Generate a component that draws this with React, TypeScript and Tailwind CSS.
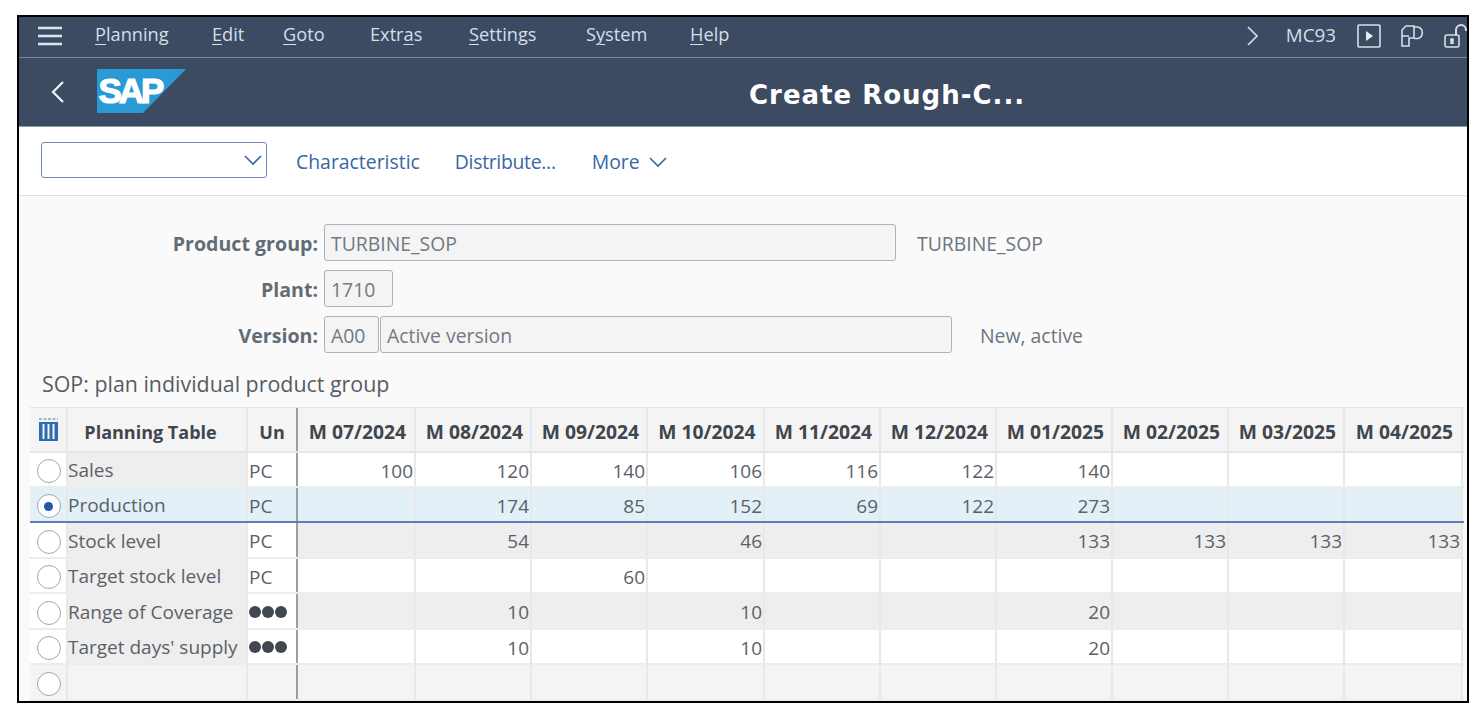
const font = "font-['Open_Sans',sans-serif]";

const months = [
  "M 07/2024",
  "M 08/2024",
  "M 09/2024",
  "M 10/2024",
  "M 11/2024",
  "M 12/2024",
  "M 01/2025",
  "M 02/2025",
  "M 03/2025",
  "M 04/2025",
];

const monthWidths = [118, 116, 116, 117, 116, 116, 116, 116, 116, 118];

type Row = {
  label: string;
  unit: string;
  values: string[];
  tone: "white" | "blue" | "gray" | "empty";
  height: string;
};

const rows: Row[] = [
  { label: "Sales", unit: "PC", values: ["100", "120", "140", "106", "116", "122", "140", "", "", ""], tone: "white", height: "h-[35px]" },
  { label: "Production", unit: "PC", values: ["", "174", "85", "152", "69", "122", "273", "", "", ""], tone: "blue", height: "h-[35px]" },
  { label: "Stock level", unit: "PC", values: ["", "54", "", "46", "", "", "133", "133", "133", "133"], tone: "gray", height: "h-[36px]" },
  { label: "Target stock level", unit: "PC", values: ["", "", "60", "", "", "", "", "", "", ""], tone: "white", height: "h-[35px]" },
  { label: "Range of Coverage", unit: "dots", values: ["", "10", "", "10", "", "", "20", "", "", ""], tone: "gray", height: "h-[36px]" },
  { label: "Target days' supply", unit: "dots", values: ["", "10", "", "10", "", "", "20", "", "", ""], tone: "white", height: "h-[35px]" },
  { label: "", unit: "", values: ["", "", "", "", "", "", "", "", "", ""], tone: "empty", height: "h-[36px]" },
];

const toneBg = {
  white: "bg-white",
  blue: "bg-[#e3f0f8]",
  gray: "bg-[#eeeeee]",
  empty: "bg-[#f4f4f4]",
};

function MenuItem({ k, rest, pre, className }: { k: string; rest: string; pre?: string; className: string }) {
  return (
    <span className={`pb-[4px] ${className}`}>
      {pre}
      <u className="underline-offset-[3px] decoration-1">{k}</u>
      {rest}
    </span>
  );
}

function Radio({ on }: { on?: boolean }) {
  return (
    <span className="flex h-[24px] w-[24px] items-center justify-center rounded-full border-[1.5px] border-[#9aa7b5] bg-white">
      {on && <span className="h-[9px] w-[9px] rounded-full bg-[#2458a6]" />}
    </span>
  );
}

function Field({ children, className }: { children: React.ReactNode; className: string }) {
  return (
    <div className={`flex h-[37px] items-center rounded-[3px] border-[1.5px] border-[#a9b4be] bg-[#f4f4f4] pl-[6px] pt-[2px] text-[#6f7a84] ${className}`}>
      {children}
    </div>
  );
}

function FormRow({ label, children }: { label: string; children: React.ReactNode }) {
  return (
    <div className="flex h-[37px] items-center">
      <div className="w-[299px] pt-[2px] text-right text-[19.6px] font-bold text-[#626c75]">{label}</div>
      <div className="ml-[6px] flex items-center">{children}</div>
    </div>
  );
}

function Logo() {
  return (
    <svg width="89" height="44" viewBox="0 0 89 44" className="mb-[2px] ml-[32px]">
      <polygon points="0,0 89,0 46,44 0,44" fill="#2a9ad6" />
      <text x="1.5" y="34" fontFamily="Liberation Sans, sans-serif" fontWeight="700" fontSize="35" letterSpacing="-3" fill="#fff" stroke="#fff" strokeWidth="1.2">
        SAP
      </text>
    </svg>
  );
}

export default function App() {
  return (
    <div className={`h-[717px] w-[1480px] overflow-hidden bg-white pl-[17px] pt-[15px] ${font}`}>
      <div className="h-[688px] w-[1452px] overflow-hidden border-2 border-black bg-[#fafafa]">
        {/* menu bar */}
        <div className="flex h-[41px] items-center border-b border-[#6f8ba8] bg-[#3c4b61] text-[18.2px] text-[#d3dfe9]">
          <svg width="26" height="20" viewBox="0 0 26 20" className="mb-[2px] ml-[18px]" fill="none" stroke="#dbe7f0" strokeWidth="2.6">
            <path d="M1 2h24M1 10h24M1 18h24" />
          </svg>
          <MenuItem k="P" rest="lanning" className="ml-[32px] w-[117px]" />
          <MenuItem k="E" rest="dit" className="w-[71px]" />
          <MenuItem k="G" rest="oto" className="w-[87px]" />
          <MenuItem pre="Extr" k="a" rest="s" className="w-[99px]" />
          <MenuItem k="S" rest="ettings" className="w-[117px]" />
          <MenuItem pre="S" k="y" rest="stem" className="w-[104px]" />
          <MenuItem k="H" rest="elp" className="w-[50px]" />
          <div className="mb-[2px] ml-auto flex items-center">
            <svg width="13" height="20" viewBox="0 0 13 20" fill="none" stroke="#d3dfe9" strokeWidth="1.7">
              <path d="M2 1l9 9-9 9" />
            </svg>
            <span className="ml-[27px] pb-[2px] text-[18.8px]">MC93</span>
            <svg width="24" height="24" viewBox="0 0 24 24" className="ml-[21px]" fill="none" stroke="#d3dfe9" strokeWidth="1.6">
              <rect x="1" y="1" width="22" height="22" rx="1" />
              <path d="M9 7l7 5-7 5z" fill="#e6eef4" stroke="none" />
            </svg>
            <svg width="25" height="22" viewBox="0 0 25 22" className="ml-[19px]" fill="none" stroke="#d3dfe9" strokeWidth="1.6">
              <path d="M2 21V5l4-4h8v12H9v8H2zM2 11h7M14 2h4a6 6 0 0 1 0 11.5h-4" />
            </svg>
            <svg width="24" height="24" viewBox="0 0 24 24" className="ml-[19px] mr-[-1px]" fill="none" stroke="#d3dfe9" strokeWidth="1.6">
              <rect x="1" y="11" width="14" height="12" rx="2" />
              <path d="M12 11V6a5 5 0 0 1 10 0v1" strokeWidth="2" />
              <circle cx="8" cy="16" r="2" fill="#d3dfe9" stroke="none" />
              <path d="M6 20h4l-1-4H7z" fill="#d3dfe9" stroke="none" />
            </svg>
          </div>
        </div>

        {/* title bar */}
        <div className="relative flex h-[69px] items-center border-b border-[#8d98a5] bg-[#3c4b61]">
          <svg width="14" height="22" viewBox="0 0 14 22" className="ml-[32px]" fill="none" stroke="#eef3f7" strokeWidth="2.2">
            <path d="M12 1L2 11l10 10" />
          </svg>
          <Logo />
          <div className="absolute left-[730px] top-[19px] font-['DejaVu_Sans',sans-serif] text-[26px] leading-[36px] font-bold tracking-[1px] text-white">
            Create Rough-C...
          </div>
        </div>

        {/* toolbar */}
        <div className="flex h-[69px] items-center border-b border-[#dfe1e3] bg-white text-[19.4px] text-[#3a66a5]">
          <div className="mb-[2px] ml-[22px] flex h-[36px] w-[226px] items-center justify-end rounded-[3px] border-[1.5px] border-[#6d86bd] bg-white pr-[4px]">
            <svg width="18" height="11" viewBox="0 0 18 11" fill="none" stroke="#3a66a5" strokeWidth="1.6">
              <path d="M1 1l8 8 8-8" />
            </svg>
          </div>
          <span className="ml-[29px] pt-[2px]">Characteristic</span>
          <span className="ml-[35px] pt-[2px] tracking-[-0.3px]">Distribute...</span>
          <span className="ml-[36px] pt-[2px]">More</span>
          <svg width="18" height="11" viewBox="0 0 18 11" className="ml-[9px] mt-[2px]" fill="none" stroke="#3a66a5" strokeWidth="1.6">
            <path d="M1 1l8 8 8-8" />
          </svg>
        </div>

        {/* header fields */}
        <div className="flex flex-col gap-[9px] pt-[28px] text-[19.4px]">
          <FormRow label="Product group:">
            <Field className="w-[572px]">TURBINE_SOP</Field>
            <span className="ml-[21px] pt-[2px] text-[#6b7680]">TURBINE_SOP</span>
          </FormRow>
          <FormRow label="Plant:">
            <Field className="w-[69px]">1710</Field>
          </FormRow>
          <FormRow label="Version:">
            <Field className="w-[55px]">A00</Field>
            <Field className="ml-[1px] w-[572px]">Active version</Field>
            <span className="ml-[28px] pt-[2px] text-[#6b7680]">New, active</span>
          </FormRow>
        </div>

        <div className="ml-[23px] mt-[17px] h-[28px] text-[21.4px] leading-[28px] text-[#555c63]">SOP: plan individual product group</div>

        {/* planning table */}
        <div className="ml-[11px] mt-[9px] w-[1434px] border-t border-[#e6e6e6]">
          <div className="flex h-[45px] border-b-2 border-[#e6e6e6] bg-[#f4f4f4] text-[18px] font-bold text-[#3f464d]">
            <div className="flex w-[38px] items-center justify-center border-r-2 border-[#e8e8e8]">
              <svg width="21" height="24" viewBox="0 0 21 24">
                <path d="M1 1h19" stroke="#8aa5c9" strokeWidth="1.4" strokeDasharray="3 1.5" />
                <rect x="1" y="4" width="19" height="19" fill="#2e6bb3" />
                <path d="M5.5 6v15M10.5 6v15M15.5 6v15" stroke="#f4f4f4" strokeWidth="2" />
              </svg>
            </div>
            <div className="flex w-[180px] items-center justify-center border-r-2 border-[#e8e8e8] pr-[13px] pt-[5px]">Planning Table</div>
            <div className="flex w-[50px] items-center justify-center border-r-2 border-[#9a9fa4] pt-[5px]">Un</div>
            {months.map((m, i) => (
              <div key={m} style={{ width: monthWidths[i] }} className="flex items-center justify-center border-r-2 border-[#e8e8e8] pl-[3px] pt-[5px] text-[19.3px]">
                {m}
              </div>
            ))}
          </div>
          {rows.map((row, idx) => (
            <div
              key={idx}
              className={`flex ${row.height} border-b-2 text-[19px] text-[#5b6168] ${row.tone === "blue" ? "border-[#5f7dbb]" : "border-[#ececec]"}`}
            >
              <div className={`flex w-[38px] items-center justify-center border-r-2 border-[#e8e8e8] pl-[1px] pt-[3px] ${row.tone === "blue" ? "bg-[#e3f0f8]" : row.tone === "empty" ? "bg-[#f4f4f4]" : "bg-white"}`}>
                <Radio on={row.tone === "blue"} />
              </div>
              <div className={`flex w-[180px] items-center border-r-2 border-[#e8e8e8] pt-[2px] ${row.tone === "blue" ? "bg-[#e3f0f8]" : row.tone === "empty" ? "bg-[#f4f4f4]" : "bg-[#eeeeee]"}`}>
                <span className="whitespace-nowrap">{row.label}</span>
              </div>
              <div className={`flex w-[50px] items-center border-r-2 border-[#9a9fa4] pl-[1px] pt-[3px] ${row.tone === "blue" ? "bg-[#e3f0f8]" : row.tone === "empty" ? "bg-[#f4f4f4]" : "bg-white"}`}>
                {row.unit === "dots" ? (
                  <span className="mb-[2px] flex gap-[1px]">
                    <span className="h-[12px] w-[12px] rounded-full bg-[#41474e]" />
                    <span className="h-[12px] w-[12px] rounded-full bg-[#41474e]" />
                    <span className="h-[12px] w-[12px] rounded-full bg-[#41474e]" />
                  </span>
                ) : (
                  row.unit
                )}
              </div>
              {row.values.map((v, i) => (
                <div
                  key={i}
                  style={{ width: monthWidths[i] }}
                  className={`flex items-center justify-end border-r-2 border-[#e8e8e8] pr-[1px] pt-[3px] ${toneBg[row.tone]}`}
                >
                  {v}
                </div>
              ))}
            </div>
          ))}
        </div>
      </div>
    </div>
  );
}
